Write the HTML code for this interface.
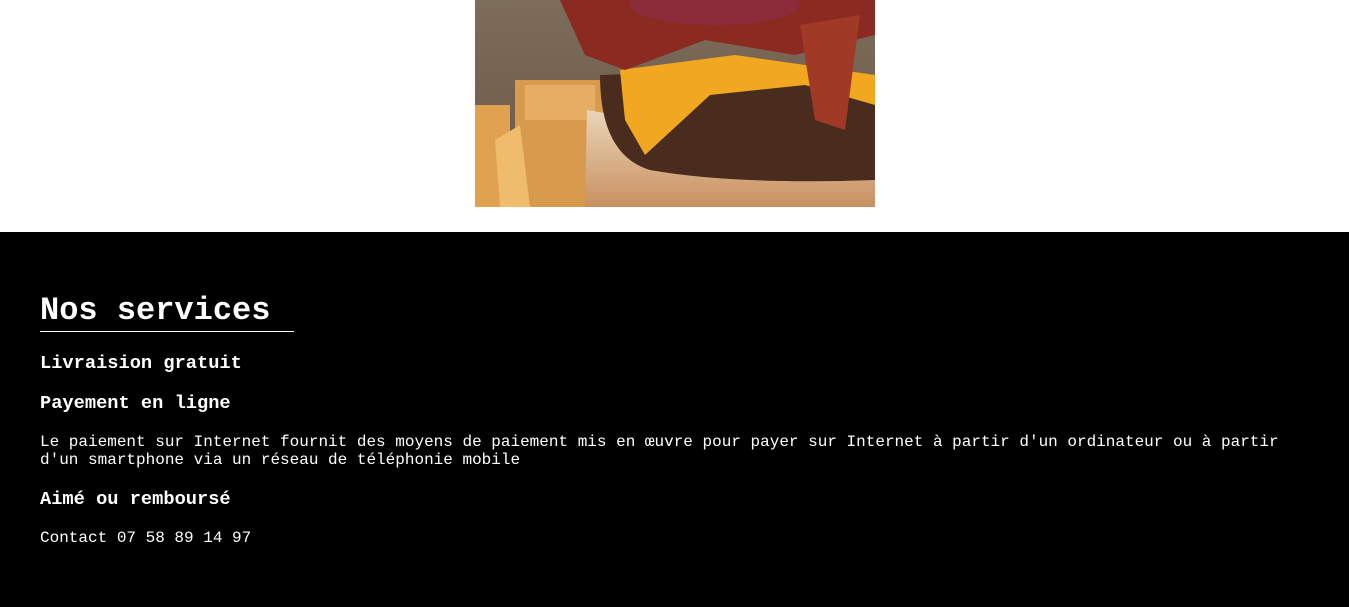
<!DOCTYPE html>
<html><head><style>
html,body{margin:0;padding:0;background:#fff;width:1350px;height:607px;overflow:hidden}
.img{position:absolute;left:475px;top:0;width:400px;height:207px;overflow:hidden;background:#6b5a4a}
footer{position:absolute;left:0;top:232px;width:1349px;height:375px;background:#000;color:#fff;font-family:"Liberation Mono",monospace}
h2{position:absolute;left:40px;top:59px;margin:0;font-size:32px;line-height:40px;font-weight:bold;width:254px;border-bottom:1.5px solid #fff;padding-bottom:0}
h4{position:absolute;left:40px;margin:0;font-size:18.7px;line-height:22px;font-weight:bold}
p{position:absolute;left:40px;margin:0;font-size:16px;line-height:18px;width:1270px}
</style></head><body>
<div class="img">
<svg width="400" height="207" viewBox="0 0 400 207">
<defs>
<linearGradient id="bg" x1="0" y1="0" x2="0" y2="1"><stop offset="0" stop-color="#7d6c5a"/><stop offset="1" stop-color="#6a5848"/></linearGradient>
<linearGradient id="bun" x1="0" y1="0" x2="0" y2="1"><stop offset="0" stop-color="#ead6b8"/><stop offset="1" stop-color="#c89060"/></linearGradient>
</defs>
<rect width="400" height="207" fill="url(#bg)"/>
<rect x="40" y="80" width="90" height="127" fill="#d89a4c"/>
<rect x="50" y="85" width="70" height="35" fill="#e6ae62"/>
<rect x="0" y="105" width="35" height="102" fill="#e0a250"/>
<path d="M20 140 L45 125 L55 207 L25 207Z" fill="#efbb6c"/>
<path d="M110 207 L112 110 Q250 135 400 120 L400 207Z" fill="url(#bun)"/>
<path d="M125 75 Q260 70 400 85 L400 180 Q260 185 175 170 Q125 155 125 75Z" fill="#4a2c1e"/>
<path d="M145 70 L260 55 L400 75 L400 105 L330 85 L235 95 L170 155 L150 120Z" fill="#f2a720"/>
<path d="M85 0 L400 0 L400 35 L320 55 L230 40 L150 70 L110 55Z" fill="#8a2a20"/>
<ellipse cx="240" cy="5" rx="85" ry="20" fill="#8c2c3a"/>
<path d="M325 25 L385 15 L370 130 L340 120Z" fill="#a03a26"/>
</svg>
</div>
<footer>
<h2>Nos services</h2>
<h4 style="top:120px">Livraision gratuit</h4>
<h4 style="top:160px">Payement en ligne</h4>
<p style="top:201px">Le paiement sur Internet fournit des moyens de paiement mis en œuvre pour payer sur Internet à partir d'un ordinateur ou à partir d'un smartphone via un réseau de téléphonie mobile</p>
<h4 style="top:256px">Aimé ou remboursé</h4>
<p style="top:297px">Contact 07 58 89 14 97</p>
</footer>
</body></html>
